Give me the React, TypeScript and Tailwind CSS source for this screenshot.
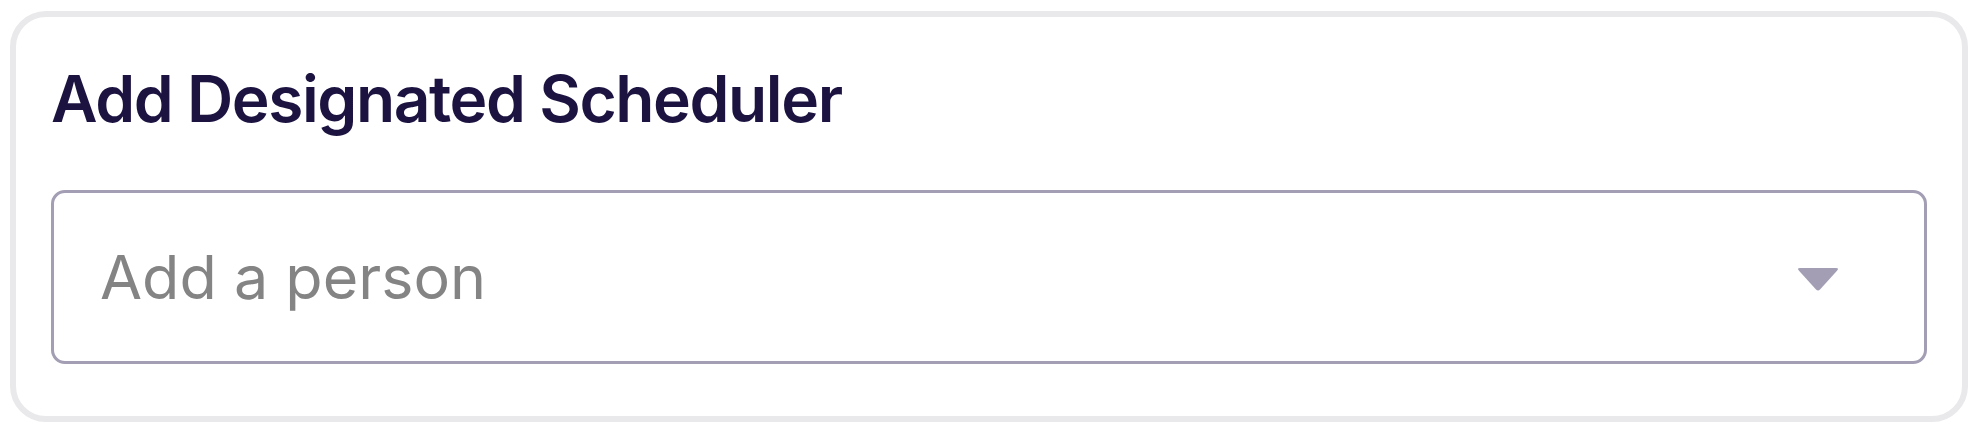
export default function App() {
	return (
		<div className="min-h-screen bg-white pl-[10px] pr-[12px] pt-[11px] pb-[12px]">
			{/* Card */}
			<div className="rounded-[36px] border-[6px] border-[#e9e9eb] bg-white px-[35px] pt-[50px] pb-[52px]">
				<h2
					className="text-[64px] font-semibold leading-none tracking-[-0.022em] text-[#1c1340]"
					style={{ fontFamily: '"Inter", "Liberation Sans", sans-serif' }}
				>
					Add Designated Scheduler
				</h2>

				{/* Select */}
				<button className="mt-[59px] flex h-[174px] w-full items-center justify-between rounded-[14px] border-[3px] border-[#a39eb4] bg-white pl-[46px] pr-[84px] text-left">
					<span
						className="text-[61px] leading-none text-[#848484]"
						style={{ fontFamily: '"Inter", "Liberation Sans", sans-serif' }}
					>
						Add a person
					</span>
					<svg width="44" height="26" viewBox="0 0 44 26" className="mt-[6px]">
						<path d="M4 1 H40 Q43.5 1 41 3.8 L24 22.5 Q22 24.5 20 22.5 L3 3.8 Q0.5 1 4 1 Z" fill="#a39eb4" />
					</svg>
				</button>
			</div>
		</div>
	)
}
